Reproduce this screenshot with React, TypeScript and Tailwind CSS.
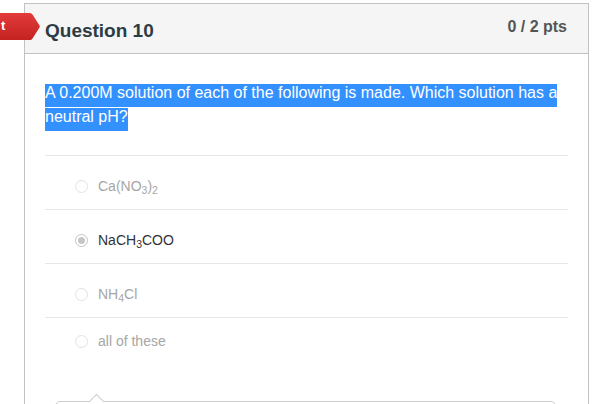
import React from 'react';

type Answer = {
  id: string;
  label: React.ReactNode;
  selected?: boolean;
};

const answers: Answer[] = [
  { id: 'a', label: <>Ca(NO<sub>3</sub>)<sub>2</sub></> },
  { id: 'b', label: <>NaCH<sub>3</sub>COO</>, selected: true },
  { id: 'c', label: <>NH<sub>4</sub>Cl</> },
  { id: 'd', label: 'all of these' },
];

const Radio: React.FC<{ checked?: boolean }> = ({ checked }) => (
  <span
    className={
      checked
        ? 'flex h-[13px] w-[13px] shrink-0 items-center justify-center rounded-full border border-[#c4c4c4] bg-white'
        : 'flex h-[13px] w-[13px] shrink-0 items-center justify-center rounded-full border border-[#e2e2e2] bg-white'
    }
  >
    {checked && <span className="h-[7px] w-[7px] rounded-full bg-[#c6c6c6]" />}
  </span>
);

const ResultTag: React.FC = () => (
  <div className="absolute left-0 top-[13px] h-[27px] w-[41px]">
    <svg width="41" height="27" viewBox="0 0 41 27" className="absolute inset-0">
      <defs>
        <linearGradient id="tagRed" x1="0" y1="0" x2="0" y2="1">
          <stop offset="0" stopColor="#e23b3b" />
          <stop offset="1" stopColor="#c42222" />
        </linearGradient>
      </defs>
      <path d="M0 0 H30 Q31.5 0 32.5 1.5 L39.5 12.5 Q40.2 13.5 39.5 14.5 L32.5 25.5 Q31.5 27 30 27 H0 Z" fill="url(#tagRed)" />
    </svg>
    <span className="absolute left-[1px] top-[5px] text-[13px] font-bold leading-4 text-white">t</span>
  </div>
);

export default function App() {
  return (
    <div
      className="relative h-[404px] w-[599px] overflow-hidden bg-white pt-[3px]"
      style={{ fontFamily: '"Liberation Sans", Arial, sans-serif' }}
    >
      <div className="ml-[24px] h-[420px] w-[565px] border border-[#c2c2c2] bg-white">
        <div className="flex h-[50px] items-start justify-between border-b border-[#c2c2c2] bg-[#f5f5f5] pl-5 pr-[21px]">
          <h2 className="pt-[15px] text-[19px] font-bold leading-6 text-[#2d3b45]">Question 10</h2>
          <span className="pt-[13px] text-[16px] font-bold leading-5 text-[#555555]">0 / 2 pts</span>
        </div>

        <div className="px-5">
          <p className="pb-[26px] pt-[27px] text-[16px] leading-6 text-white">
            <span className="bg-[#3390ff] pb-[6px] [box-decoration-break:clone]">
              A 0.200M solution of each of the following is made. Which solution has a neutral pH?
            </span>
          </p>

          {answers.map((a, i) => {
            const last = i === answers.length - 1;
            return (
              <div
                key={a.id}
                className={
                  last
                    ? 'flex h-[76px] items-start gap-[10px] border-t border-[#e6e6e6] pl-[30px] pt-[14px]'
                    : 'flex h-[54px] items-start gap-[10px] border-t border-[#e6e6e6] pl-[30px] pt-[21px]'
                }
              >
                <span className="flex h-[18px] items-center">
                  <Radio checked={a.selected} />
                </span>
                <span
                  className={
                    a.selected
                      ? 'text-[14px] leading-[18px] text-[#333333]'
                      : 'text-[14px] leading-[18px] text-[#a6a6a6]'
                  }
                >
                  {a.label}
                </span>
              </div>
            );
          })}

          <div className="relative ml-[10px] mr-[12px] mt-[8px] h-[40px] rounded-[5px] border border-[#c7cdd1] bg-white">
            <span className="absolute left-[35px] top-[-6px] h-[11px] w-[11px] rotate-45 border-l border-t border-[#c7cdd1] bg-white" />
          </div>
        </div>
      </div>
      <ResultTag />
    </div>
  );
}
